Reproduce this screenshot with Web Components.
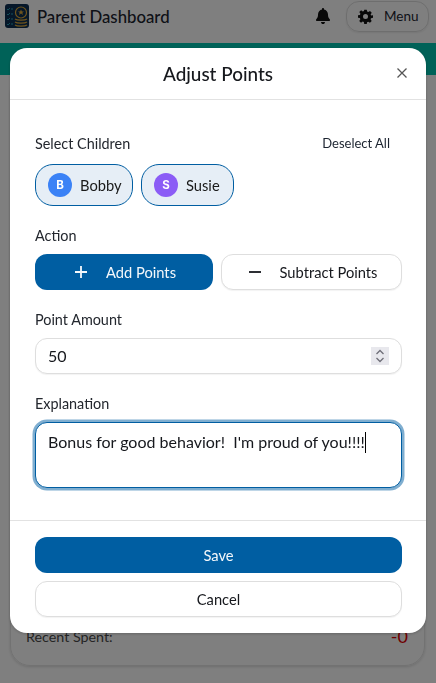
<!DOCTYPE html>
<html lang="en">
<head>
<meta charset="utf-8">
<title>Parent Dashboard</title>
<style>
  html, body { margin: 0; height: 100%; }
  body { background: #fff; color: #1a1a1a; font-family: "Lato", "Noto Sans", sans-serif; overflow: hidden; }
</style>
</head>
<body>
<app-header></app-header>
<app-band></app-band>
<stats-card></stats-card>

<modal-dialog heading="Adjust Points">
  <form-row label="Select Children" action="Deselect All">
    <div style="display:grid;grid-template-columns:98px 93px;gap:8px">
      <child-chip initial="B" color="#3b82f6">Bobby</child-chip>
      <child-chip initial="S" color="#8b5cf6">Susie</child-chip>
    </div>
  </form-row>
  <form-row label="Action">
    <div style="display:grid;grid-template-columns:178px 181px;gap:8px">
      <app-button kind="primary" icon="plus">Add Points</app-button>
      <app-button icon="minus">Subtract Points</app-button>
    </div>
  </form-row>
  <form-row label="Point Amount">
    <number-box>50</number-box>
  </form-row>
  <form-row label="Explanation">
    <text-box>Bonus for good behavior!&nbsp; I'm proud of you!!!!</text-box>
  </form-row>
  <app-button slot="footer" kind="primary">Save</app-button>
  <app-button slot="footer">Cancel</app-button>
</modal-dialog>

<script>
// small helper so each class only has to give its markup
class Base extends HTMLElement {
  constructor() {
    super()
    this.attachShadow({ mode: 'open' })
  }
  connectedCallback() {
    this.shadowRoot.innerHTML = this.markup()
  }
}

class AppHeader extends Base {
  markup() {
    return `
    <style>
      :host { display: flex; align-items: center; height: 43px; padding: 4px 7px 15px 5px; box-sizing: border-box; background: #fff; }
      .logo { width: 24px; height: 24px; flex: none; }
      h1 { margin: 0 0 0 8px; font: 500 16.75px "Lato", "Noto Sans", sans-serif; color: #1c2430; flex: 1; }
      .bell { width: 14px; height: 16px; margin-right: 16px; }
      .menu { display: flex; align-items: center; gap: 11px; height: 31px; width: 83px; box-sizing: border-box; flex: none;
        padding-left: 11px; border: 1px solid #ddd; border-radius: 13px; font-size: 13.5px; color: #1c2430; box-shadow: 0 1px 2px rgba(0,0,0,.08); }
      .menu svg { width: 15px; height: 15px; flex: none; }
    </style>
    <svg class="logo" viewBox="0 0 24 24">
      <rect width="24" height="24" rx="3" fill="#0d2f52"/>
      <g fill="none" stroke="#2a9fb5" stroke-width="1">
        <path d="M2 5l1 1 2-2M6 5h2M2 10l1 1 2-2M6 10h2M2 15l1 1 2-2M6 15h2M2 20l1 1 2-2M6 20h2"/>
      </g>
      <g fill="none" stroke="#e0a93a" stroke-width="1.2">
        <circle cx="16" cy="8.5" r="5.5"/>
        <path d="M10 15c2 1.6 10 1.6 12 0M10 18c2 1.6 10 1.6 12 0M10 21c2 1.6 10 1.6 12 0"/>
      </g>
      <path d="M16 5.5l.9 2h2.1l-1.7 1.3.7 2.1-2-1.3-2 1.3.7-2.1L13 7.500h2.100z" fill="#e0a93a"/>
    </svg>
    <h1>Parent Dashboard</h1>
    <svg class="bell" viewBox="0 0 448 512"><path fill="#111" d="M224 0c-17.700 0-32 14.300-32 32v19.200C119 66 64 130.600 64 208v18.800c0 47-17.300 92.400-48.500 127.600l-7.400 8.300c-8.400 9.400-10.400 22.900-5.300 34.400S19.400 416 32 416h384c12.600 0 24-7.400 29.200-18.900s3.100-25-5.300-34.400l-7.400-8.300C401.300 319.200 384 273.900 384 226.800V208c0-77.400-55-142-128-156.800V32c0-17.700-14.300-32-32-32zm45.300 493.300c12-12 18.700-28.300 18.700-45.300H160c0 17 6.700 33.300 18.700 45.300S207 512 224 512s33.300-6.700 45.300-18.700z"/></svg>
    <div class="menu">
      <svg viewBox="0 0 24 24"><path fill="#111" fill-rule="evenodd" d="M10 1h4l.6 3.100 1.900.8 2.700-1.800 2.800 2.800-1.800 2.700.8 1.900L24 10v4l-3.100.6-.8 1.900 1.800 2.700-2.800 2.800-2.700-1.800-1.900.8L14 24h-4l-.6-3.100-1.900-.8-2.700 1.800-2.800-2.800 1.800-2.700-.8-1.900L0 14v-4l3.100-.6.8-1.900L2.100 4.800l2.800-2.800 2.700 1.800 1.900-.8zM12 8a4 4 0 1 0 0 8 4 4 0 0 0 0-8z"/></svg>
      <span>Menu</span>
    </div>`
  }
}

class AppBand extends Base {
  markup() {
    return `<style>:host { display: block; height: 32px; background: #00c4b0; }</style>`
  }
}

// the page card behind the dialog, only its bottom edge shows
class StatsCard extends Base {
  markup() {
    return `
    <style>
      :host { display: flex; flex-direction: column; justify-content: flex-end; box-sizing: border-box; height: 591px; margin: 0 11px 0 10px;
        padding: 0 16px 18px 15px; border-radius: 20px; border: 1px solid #e4e4e4; box-shadow: 0 1px 3px rgba(0,0,0,.15); font-size: 14.3px; color: #4a4a4a; }
      .row { display: flex; justify-content: space-between; align-items: center; }
      b { font-weight: 400; font-size: 18px; color: #e00000; }
    </style>
    <div class="row"><span>Recent Spent:</span><b>-0</b></div>`
  }
}

class ModalDialog extends Base {
  markup() {
    return `
    <style>
      :host { position: fixed; inset: 0; display: block; background: rgba(0,0,0,.5); }
      .panel { position: absolute; left: 10px; top: 48px; width: 416px; background: #fff; border-radius: 17px; box-shadow: 0 1px 3px rgba(0,0,0,.2); }
      header { position: relative; height: 51px; display: flex; align-items: center; justify-content: center; border-bottom: 1px solid #e2e2e2; box-sizing: content-box; }
      h2 { margin: 0; font: 500 18.9px "Lato", "Noto Sans", sans-serif; color: #16181d; }
      .close { position: absolute; right: 19px; top: 20px; width: 10px; height: 10px; }
      main { display: flex; flex-direction: column; gap: 21px; padding: 34px 24px 32px 25px; border-bottom: 1px solid #e2e2e2; }
      footer { display: flex; flex-direction: column; gap: 8px; padding: 16px 24px 16px 25px; }
      ::slotted(form-row) { display: block; }
    </style>
    <div class="panel">
      <header>
        <h2>${this.getAttribute('heading')}</h2>
        <svg class="close" viewBox="0 0 10 10"><path d="M.5.500l9 9M9.500.500l-9 9" stroke="#555" stroke-width="1.300" fill="none"/></svg>
      </header>
      <main><slot></slot></main>
      <footer><slot name="footer"></slot></footer>
    </div>`
  }
}

class FormRow extends Base {
  markup() {
    const action = this.getAttribute('action')
    return `
    <style>
      :host { display: block; }
      .top { display: flex; justify-content: space-between; align-items: center; box-sizing: border-box; height: 18px; padding-bottom: 2px; margin-bottom: 9px; font-size: 14.4px; color: #23272e; }
      :host([action]) .top { height: 20px; margin-bottom: 10px; }
      .act { font-size: 13px; padding-right: 12px; color: #1c2430; }
    </style>
    <div class="top"><span>${this.getAttribute('label')}</span>${action ? `<span class="act">${action}</span>` : ''}</div>
    <slot></slot>`
  }
}

class ChildChip extends Base {
  markup() {
    return `
    <style>
      :host { display: flex; align-items: center; gap: 8px; height: 42px; box-sizing: border-box; padding: 0 0 0 12px;
        background: #e6eef6; border: 1px solid #005ea2; border-radius: 18px; font-size: 14.7px; color: #1a1a1a; }
      i { display: grid; place-items: center; width: 24px; height: 24px; border-radius: 50%; font: 700 11.500px "Inter", sans-serif; color: #fff; background: ${this.getAttribute('color')}; }
    </style>
    <i>${this.getAttribute('initial')}</i><slot></slot>`
  }
}

const btnIcons = {
  plus: '<path d="M6 0v12M0 6h12" stroke="currentColor" stroke-width="1.800" fill="none"/>',
  minus: '<path d="M0 6h12" stroke="currentColor" stroke-width="1.800" fill="none"/>',
}

class AppButton extends Base {
  markup() {
    const primary = this.getAttribute('kind') === 'primary'
    const icon = btnIcons[this.getAttribute('icon')]
    return `
    <style>
      :host { display: flex; align-items: center; justify-content: center; gap: 19px; height: 36px; box-sizing: border-box; border-radius: 12px; font-size: 14.7px;
        ${icon ? 'padding-left: 3px;' : ''}
        ${primary ? 'background: #005ea2; color: #f4f8fb;' : 'background: #fff; color: #16181d; border: 1px solid #dedede; box-shadow: 0 1px 1px rgba(0,0,0,.05);'} }
      svg { width: 12px; height: 12px; flex: none; }
    </style>
    ${icon ? `<svg viewBox="0 0 12 12">${icon}</svg>` : ''}<slot></slot>`
  }
}

class NumberBox extends Base {
  markup() {
    return `
    <style>
      :host { display: flex; align-items: center; justify-content: space-between; height: 36px; box-sizing: border-box; padding: 0 12px; background: #fff;
        border: 1px solid #dedede; border-radius: 12px; box-shadow: 0 1px 1px rgba(0,0,0,.05); font-size: 16px; color: #16181d; }
      .val { margin-bottom: 2px; }
      .spin { width: 18px; height: 18px; background: #e8e8ed; }
      svg { display: block; width: 18px; height: 18px; }
    </style>
    <span class="val"><slot></slot></span>
    <div class="spin"><svg viewBox="0 0 18 18"><path d="M5.500 7L9 3.500 12.500 7M5.500 11L9 14.500 12.500 11" stroke="#6f6f78" stroke-width="1.300" fill="none"/></svg></div>`
  }
}

class TextBox extends Base {
  markup() {
    return `
    <style>
      :host { display: block; height: 66px; box-sizing: border-box; padding: 8px 12px; background: #fff; border: 1px solid #005ea2; border-radius: 12px;
        box-shadow: 0 0 0 2.5px rgba(0,94,162,.5); font-size: 16px; line-height: 22px; color: #16181d; }
      .caret { display: inline-block; width: 1px; height: 21px; background: #000; vertical-align: -5px; }
    </style>
    <slot></slot><span class="caret"></span>`
  }
}

customElements.define('app-header', AppHeader)
customElements.define('app-band', AppBand)
customElements.define('stats-card', StatsCard)
customElements.define('modal-dialog', ModalDialog)
customElements.define('form-row', FormRow)
customElements.define('child-chip', ChildChip)
customElements.define('app-button', AppButton)
customElements.define('number-box', NumberBox)
customElements.define('text-box', TextBox)
</script>
</body>
</html>
